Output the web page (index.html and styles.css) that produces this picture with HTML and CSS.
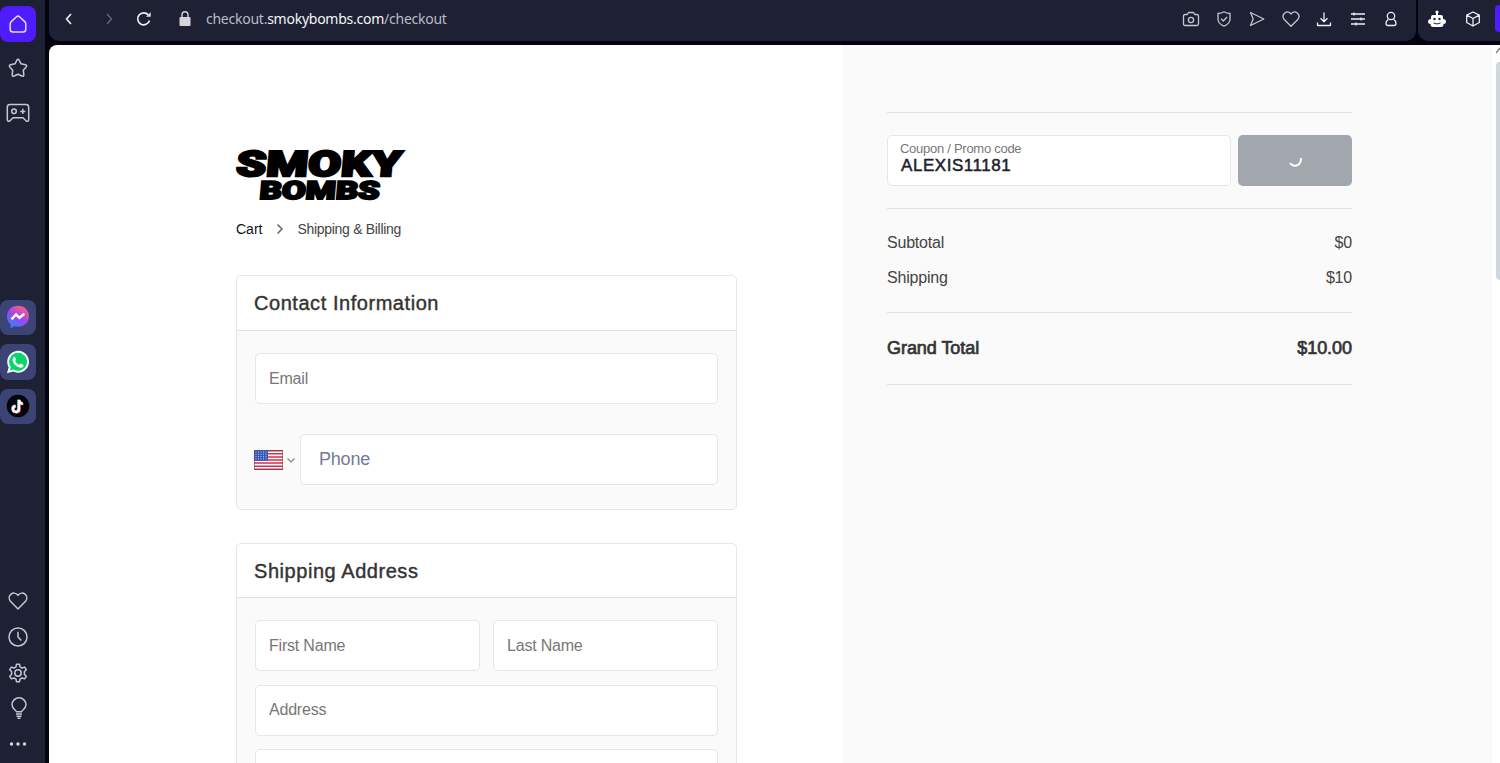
FILE: index.html
```
<!DOCTYPE html>
<html lang="en">
<head>
    <meta charset="UTF-8">
    <title>Smoky Bombs - Checkout</title>
    <link rel="stylesheet" href="styles.css">
</head>
<body>

<aside class="sidebar">
    <div class="side-group side-top">
        <a class="side-item active"><svg class="icon" width="20" height="20" viewBox="0 0 20 20"><path d="M3.5 7.4 Q2.2 8.5 2.2 10V15.2Q2.2 18 5 18H15Q17.800 18 17.800 15.200V10Q17.800 8.500 16.500 7.400L11.500 2.800Q10 1.500 8.500 2.800Z"/></svg></a>
        <a class="side-item"><svg class="icon" width="20" height="20" viewBox="0 0 20 20"><path d="M9 2Q10 .4 11 2L13 5.800 17.500 6.800Q19.400 7.400 18.200 8.900L15.300 12.200 15.800 16.700Q15.800 18.700 14 18L10 16.300 6 18Q4.200 18.700 4.200 16.700L4.700 12.200 1.800 8.900Q.6 7.400 2.500 6.800L7 5.800Z"/></svg></a>
        <a class="side-item"><svg class="icon" width="24" height="20" viewBox="0 0 24 20"><path d="M4 1.500H20Q22.700 1.500 22.700 4.200V16.500Q22.500 18.800 20.500 18.200L17 14.800H7L3.500 18.200Q1.500 18.800 1.300 16.500V4.200Q1.300 1.500 4 1.500Z"/><circle cx="8" cy="8.300" r="2.300"/><path d="M16.800 5.800V11M14.200 8.400H19.400"/></svg></a>
    </div>
    <div class="side-group side-apps">
        <a class="side-item app">
            <svg width="24" height="24" viewBox="0 0 24 24">
                <defs><linearGradient id="msg" x1=".2" y1="1" x2=".75" y2="0"><stop offset="0" stop-color="#1b8dff"/><stop offset=".5" stop-color="#a044f0"/><stop offset="1" stop-color="#ff5f80"/></linearGradient></defs>
                <path fill="url(#msg)" d="M12 .8C5.500 .8 1 5.400 1 11.500c0 3.300 1.300 6 3.600 7.900V23.300l3.700-2c1.200.3 2.400.5 3.700.5 6.500 0 11-4.500 11-10.300S18.500.8 12 .8Z"/>
                <path d="M5.500 14.300 10 9.500 13.500 12.800 18.300 8.800" fill="none" stroke="#fff" stroke-width="2.500"/>
            </svg>
        </a>
        <a class="side-item app">
            <svg width="24" height="24" viewBox="0 0 24 24">
                <path fill="#fff" d="M12.200 .8A11 11 0 0 0 2.700 17.300L1 23.200 7 21.600A11 11 0 1 0 12.200.8Z"/>
                <path fill="#08d66b" d="M12.200 2.800A9 9 0 0 0 4.800 17L3.800 20.400 7.400 19.500A9 9 0 1 0 12.200 2.800Z"/>
                <path fill="#fff" d="M8.700 6.700 10 9.500Q10 10.300 9.100 11.200 10.500 13.800 13.200 15L14.700 13.500 17.600 15Q17.500 18 14.300 17.600C10 17 6.500 12.800 6.500 9.500Q6.700 6.800 8.700 6.700Z"/>
            </svg>
        </a>
        <a class="side-item app">
            <svg width="24" height="24" viewBox="0 0 24 24" fill="none" stroke-width="2.400">
                <circle cx="12" cy="12" r="11.300" fill="#030208"/>
                <path stroke="#25e5df" d="M12.400 5.500V14.600A3 3 0 1 1 9 11.600M12.400 5.500Q13 9 16.200 9.300"/>
                <path stroke="#ff3158" d="M13.600 6.500V15.500A3 3 0 1 1 10.200 12.500M13.600 6.500Q14.200 10 17.400 10.300"/>
                <path stroke="#fff" d="M13 6V15A3 3 0 1 1 9.600 12M13 6Q13.600 9.500 16.800 9.800"/>
            </svg>
        </a>
    </div>
    <div class="side-group side-bottom">
        <a class="side-item"><svg class="icon" width="20" height="20" viewBox="0 0 20 20"><path d="M10 18 2.200 10C-1.400 5 5.500-1.300 10 4.300 14.500-1.300 21.400 5 17.800 10Z"/></svg></a>
        <a class="side-item"><svg class="icon" width="20" height="20" viewBox="0 0 20 20"><circle cx="10" cy="10" r="9"/><path d="M10 4.800V10L13.300 13.600"/></svg></a>
        <a class="side-item"><svg class="icon" width="20" height="20" viewBox="0 0 20 20"><path d="M8.500 1.200H11.500L12 3.800 14.100 5 16.600 4.100 18.300 6.700 16.400 8.500V11.500L18.300 13.300 16.600 15.900 14.100 15 12 16.200 11.500 18.800H8.500L8 16.200 5.900 15 3.400 15.900 1.700 13.300 3.600 11.500V8.500L1.700 6.700 3.400 4.100 5.900 5 8 3.800Z"/><circle cx="10" cy="10" r="3.200"/></svg></a>
        <a class="side-item bulb"><svg class="icon" width="18" height="22" viewBox="0 0 18 22"><path d="M6.500 14.800C6.500 13.600 2 11.800 2 7.800A7 7 0 0 1 16 7.800C16 11.800 11.500 13.600 11.500 14.800ZM6 17H12M6.500 19.200H11.500M7.500 21.300H10.500"/></svg></a>
        <a class="side-item"><svg width="20" height="6" viewBox="0 0 20 6" fill="#d5d8e2"><circle cx="3.500" cy="3" r="1.700"/><circle cx="10" cy="3" r="1.700"/><circle cx="16.500" cy="3" r="1.700"/></svg></a>
    </div>
</aside>

<div class="window">
    <div class="toolbar">
        <div class="bar">
            <svg class="icon nav-back" width="16" height="16" viewBox="0 0 16 16"><path d="M10 3 5.500 8 10 13"/></svg>
            <svg class="icon nav-forward" width="16" height="16" viewBox="0 0 16 16"><path d="M6 3 10.500 8 6 13"/></svg>
            <svg class="icon nav-reload" width="16" height="16" viewBox="0 0 16 16"><path d="M13.500 9.500A6 6 0 1 1 12.300 3.900"/><path class="solid" d="M10 5.800H14.700V1.200Z"/></svg>
            <svg class="nav-lock" width="14" height="18" viewBox="0 0 14 18"><rect x="1.500" y="7" width="11" height="9" rx="1" fill="#d3d5db"/><path d="M4 7V4.800a3 3 0 0 1 6 0V7" fill="none" stroke="#d3d5db" stroke-width="1.400"/></svg>
            <div class="url">checkout.<b>smokybombs.com</b>/checkout</div>
            <div class="tools">
                <svg class="icon" width="18" height="18" viewBox="0 0 18 18"><path d="M3 4.500H5.300L6.500 2.500H11.500L12.700 4.500H15Q16.500 4.500 16.500 6V14Q16.500 15.500 15 15.500H3Q1.500 15.500 1.500 14V6Q1.500 4.500 3 4.500Z"/><circle cx="9" cy="10" r="2.600"/></svg>
                <svg class="icon" width="18" height="18" viewBox="0 0 18 18"><path d="M9 1.800Q11.500 3.500 15 3.500V10Q14.600 13.500 9 16.200 3.400 13.500 3 10V3.500Q6.500 3.500 9 1.800ZM6 8.800 8.300 11 12 7"/></svg>
                <svg class="icon" width="18" height="18" viewBox="0 0 18 18"><path d="M2.500 2.500 15.800 9 2.500 15.500 5.200 9Z"/></svg>
                <svg class="icon" width="18" height="18" viewBox="0 0 18 18"><path d="M9 16.300 2 9.200C-1.200 4.600 5-1.200 9 4 13-1.200 19.200 4.600 16 9.200Z"/></svg>
                <svg class="icon bright" width="18" height="18" viewBox="0 0 18 18"><path d="M9 2.500V11.500M5.500 8.300 9 11.700 12.500 8.300M2.500 12.500V15.500H15.500V12.500"/></svg>
                <svg class="icon bright" width="18" height="18" viewBox="0 0 18 18"><path d="M2 4H16M2 9H16M2 14H16M5 2.500V5.500M12 7.500V10.500M7 12.500V15.500"/></svg>
                <svg class="icon bright" width="18" height="18" viewBox="0 0 18 18"><circle cx="9" cy="6" r="3.700"/><path d="M6.300 9.300Q4 11 4 13.500 4 15.500 6 15.500H12Q14 15.500 14 13.500 14 11 11.700 9.300"/></svg>
            </div>
        </div>
        <div class="bar extensions">
            <svg width="18" height="18" viewBox="0 0 18 18"><path fill="#fff" d="M8 3H10V5H13Q15 5 15 7V9Q18 9 18 12 18 14 15.500 14 15.500 17 13 17H5Q2.500 17 2.500 14 0 14 0 12 0 9 3 9V7Q3 5 5 5H8Z"/><circle cx="9" cy="2" r="1.600" fill="#fff"/><circle cx="6.500" cy="9" r="1.200" fill="#1e2133"/><circle cx="11.500" cy="9" r="1.200" fill="#1e2133"/><path d="M5.500 13Q9 15 12.500 13" fill="none" stroke="#1e2133"/></svg>
            <svg class="icon bright" width="18" height="18" viewBox="0 0 18 18"><path d="M9 2 15.300 5.200V12.500L9 16 2.700 12.500V5.200ZM2.700 5.200 9 8.500 15.300 5.200M9 8.500V16"/></svg>
            <span class="accent"></span>
        </div>
    </div>

    <div class="page">
        <main class="checkout">
            <svg class="logo" width="172" height="56" viewBox="0 0 172 56">
                <g transform="skewX(-5)">
                    <text class="logo-line" x="3" y="27.500" font-size="35" textLength="165" lengthAdjust="spacingAndGlyphs">SMOKY</text>
                    <text class="logo-line small" x="28.500" y="51.500" font-size="25" textLength="120" lengthAdjust="spacingAndGlyphs">BOMBS</text>
                </g>
            </svg>
            <nav class="breadcrumb">
                <span class="current">Cart</span>
                <svg width="8" height="12" viewBox="0 0 8 12"><path d="M1.500 1.500 6 6 1.500 10.500" fill="none" stroke="#666" stroke-width="1.500"/></svg>
                <span class="next">Shipping &amp; Billing</span>
            </nav>

            <section class="card contact">
                <h2>Contact Information</h2>
                <div class="card-body">
                    <input class="field" type="text" placeholder="Email">
                    <div class="phone-row">
                        <svg class="flag" width="29" height="20" viewBox="0 0 29 20">
                            <rect width="29" height="20" fill="#fff"/>
                            <path stroke="#d92b4b" stroke-width="1.540" d="M0 .8H29M0 3.850H29M0 6.900H29M0 10H29M0 13.100H29M0 16.150H29M0 19.230H29"/>
                            <rect width="14" height="10.800" fill="#3558b5"/>
                            <path stroke="#b9c9f0" stroke-dasharray="1 1.500" d="M1.500 2H13M1.500 4.300H13M1.500 6.600H13M1.500 8.900H13"/>
                            <rect x=".5" y=".5" width="28" height="19" fill="none" stroke="#555" stroke-opacity=".6"/>
                        </svg>
                        <svg class="caret" width="10" height="7" viewBox="0 0 10 7"><path d="M1.500 1.500 5 5 8.500 1.500" fill="none" stroke="#888" stroke-width="1.200"/></svg>
                        <input class="field phone" type="text" placeholder="Phone">
                    </div>
                </div>
            </section>

            <section class="card">
                <h2>Shipping Address</h2>
                <div class="card-body address">
                    <div class="name-row">
                        <input class="field" type="text" placeholder="First Name">
                        <input class="field" type="text" placeholder="Last Name">
                    </div>
                    <input class="field" type="text" placeholder="Address">
                    <input class="field" type="text">
                </div>
            </section>
        </main>

        <aside class="summary">
            <div class="coupon">
                <label class="coupon-field">
                    <span class="coupon-label">Coupon / Promo code</span>
                    <span class="coupon-code">ALEXIS11181</span>
                </label>
                <button class="apply" type="button"><svg width="16" height="16" viewBox="0 0 16 16"><path d="M13.800 5Q14.500 9.500 11 11.800 6.500 14.300 3 10.200" fill="none" stroke="#fff" stroke-width="2"/></svg></button>
            </div>
            <div class="totals">
                <div class="row"><span>Subtotal</span><span>$0</span></div>
                <div class="row"><span>Shipping</span><span>$10</span></div>
            </div>
            <div class="row grand"><span>Grand Total</span><span>$10.00</span></div>
        </aside>

        <div class="scrollbar">
            <svg width="4" height="9" viewBox="0 0 4 9"><path d="M0 8 4 3" stroke="#888" stroke-width="1.500"/></svg>
            <div class="thumb"></div>
        </div>
    </div>
</div>

</body>
</html>
```

FILE: styles.css
```
* {
    box-sizing: border-box;
}
body {
    display: flex;
    height: 763px;
    margin: 0;
    overflow: hidden;
    background-color: #03040f;
    font-family: "Liberation Sans", Arial, sans-serif;
    color: #333;
}
svg {
    display: block;
    flex-shrink: 0;
}
.icon {
    fill: none;
    stroke: #c3c6d3;
    stroke-width: 1.3;
    stroke-linejoin: round;
}
.icon .solid {
    fill: #e4e6ec;
    stroke: none;
}
.icon.bright {
    stroke: #eceef4;
}

/* browser sidebar */
.sidebar {
    width: 45px;
    flex-shrink: 0;
    background-color: #1e2133;
}
.side-group {
    display: flex;
    flex-direction: column;
    gap: 9px;
}
.side-item {
    display: flex;
    align-items: center;
    justify-content: center;
    width: 36px;
    height: 35.5px;
    border-radius: 8px;
}
.side-item .icon {
    stroke-width: 1.5;
}
.side-top {
    padding-top: 6px;
}
.side-apps {
    margin-top: 169px;
}
.side-bottom {
    gap: 0;
    margin-top: 159.5px;
}
.side-bottom .side-item {
    height: 35.7px;
}
.active {
    background-color: #4f1cff;
}
.active .icon {
    stroke: #e3ddff;
}
.app {
    background-color: #3b4475;
}
.bulb {
    padding-left: 1px;
}

/* toolbar */
.window {
    display: flex;
    flex-direction: column;
    flex: 1;
    min-width: 0;
    padding-left: 4px;
}
.toolbar {
    display: flex;
    gap: 2px;
    height: 45px;
    padding-bottom: 4px;
}
.bar {
    display: flex;
    align-items: center;
    width: 1367px;
    height: 41px;
    padding: 0 16px 4px 12px;
    border-radius: 0 0 10px 10px;
    background-color: #1e2133;
}
.nav-back {
    stroke: #eceef4;
    stroke-width: 1.7;
}
.nav-forward {
    margin-left: 24px;
    stroke: #656979;
}
.nav-reload {
    margin-left: 19px;
    stroke: #eceef4;
    stroke-width: 1.7;
}
.nav-lock {
    margin-left: 26px;
}
.url {
    margin-left: 14px;
    font-family: "Noto Sans", sans-serif;
    font-size: 14px;
    letter-spacing: -0.25px;
    color: #b9bcc8;
}
.url b {
    font-weight: 400;
    color: #f4f5f8;
}
.tools {
    display: flex;
    gap: 15.4px;
    margin-left: auto;
}
.extensions {
    flex: 1;
    width: auto;
    padding: 0 0 4px 10px;
    border-radius: 0 0 0 10px;
}
.extensions .icon {
    margin-left: 18px;
}
.accent {
    width: 5px;
    height: 27px;
    margin-left: auto;
    border-radius: 4px 0 0 4px;
    background-color: #4f1cff;
}

/* page */
.page {
    display: flex;
    flex: 1;
    min-height: 0;
    overflow: hidden;
    border-radius: 8px 0 0 0;
    background-color: #fff;
}
.checkout {
    width: 793px;
    padding: 103px 105px 0 187px;
}
.logo {
    margin-left: -1px;
    overflow: visible;
}
.logo-line {
    font-family: Roboto, sans-serif;
    font-weight: 900;
    fill: #000;
    stroke: #000;
    stroke-width: 2.4;
}
.logo-line.small {
    stroke-width: 2;
}
.breadcrumb {
    display: flex;
    align-items: center;
    height: 20px;
    margin-top: 15px;
    font-size: 14px;
    color: #444;
}
.breadcrumb svg {
    margin: 0 13px 0 14px;
}
.breadcrumb .current {
    color: #111;
}
.breadcrumb .next {
    letter-spacing: -0.3px;
}
.card {
    width: 501px;
    border: 1px solid #e6e6e6;
    border-radius: 5px;
    background-color: #fafafa;
}
.contact {
    height: 235px;
    margin: 36px 0 33px;
}
.card h2 {
    height: 54px;
    margin: 0;
    padding-left: 17px;
    border-bottom: 1px solid #dfdfdf;
    border-radius: 5px 5px 0 0;
    background-color: #fff;
    font-size: 20px;
    font-weight: 400;
    line-height: 54px;
    letter-spacing: 0.55px;
    -webkit-text-stroke: 0.4px #333;
}
.contact h2 {
    height: 55px;
}
.card-body {
    padding: 22px 18px;
}
.field {
    display: block;
    width: 100%;
    height: 51px;
    padding: 0 13px;
    border: 1px solid #e6e6e6;
    border-radius: 5px;
    background-color: #fff;
    font-family: inherit;
    font-size: 16px;
    letter-spacing: -0.2px;
}
.field::placeholder {
    color: #777;
}
.phone-row {
    display: flex;
    align-items: center;
    margin: 30px 0 0 -1px;
}
.caret {
    margin: 2px 4px 0 3px;
}
.phone {
    flex: 1;
    padding-left: 18px;
    font-size: 18px;
}
.phone::placeholder {
    color: #757a99;
}
.address {
    display: flex;
    flex-direction: column;
    gap: 13.5px;
}
.name-row {
    display: grid;
    grid-template-columns: 1fr 1fr;
    gap: 13px;
}

/* order summary */
.summary {
    width: 650px;
    padding: 67px 140px 0 45px;
    background-color: #fafafa;
}
.coupon {
    display: flex;
    gap: 7px;
    height: 97px;
    padding: 22px 0;
    border-top: 1px solid #e2e2e2;
    border-bottom: 1px solid #e2e2e2;
}
.coupon-field {
    width: 344px;
    height: 51px;
    padding: 5px 12px;
    border: 1px solid #e6e6e6;
    border-radius: 5px;
    background-color: #fff;
}
.coupon-label {
    display: block;
    font-size: 13px;
    line-height: 15px;
    letter-spacing: -0.27px;
    color: #777;
}
.coupon-code {
    display: block;
    padding-left: 1px;
    font-size: 17px;
    line-height: 20px;
    letter-spacing: 0.55px;
    color: #1c1e30;
    -webkit-text-stroke: 0.5px #1c1e30;
}
.apply {
    display: flex;
    align-items: center;
    justify-content: center;
    width: 114px;
    height: 51px;
    padding: 0;
    border: none;
    border-radius: 5px;
    background-color: #a2a7ad;
}
.totals {
    height: 104px;
    padding-top: 17px;
    border-bottom: 1px solid #e2e2e2;
}
.row {
    display: flex;
    justify-content: space-between;
    font-size: 16px;
    line-height: 34.5px;
    letter-spacing: -0.2px;
    color: #444;
}
.grand {
    height: 72px;
    border-bottom: 1px solid #e2e2e2;
    font-size: 18px;
    line-height: 71px;
    letter-spacing: -0.05px;
    color: #333;
    -webkit-text-stroke: 0.7px #333;
}
.scrollbar {
    display: flex;
    flex-direction: column;
    align-items: flex-end;
    width: 8px;
    background-color: #fff;
}
.thumb {
    width: 4px;
    height: 218px;
    margin-top: 8px;
    border-radius: 4px 0 0 4px;
    background-color: #cfd8df;
}
```
